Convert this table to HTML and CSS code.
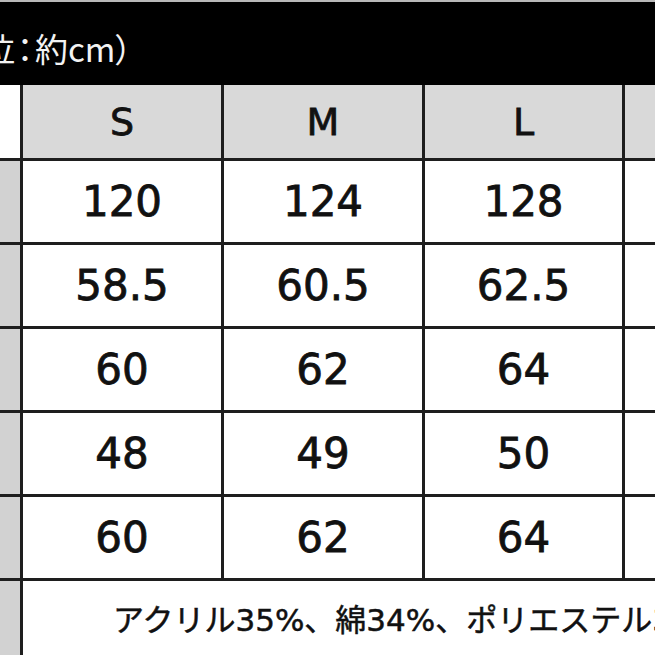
FILE: index.html
```html
<!DOCTYPE html>
<html lang="ja">
<head>
<meta charset="utf-8">
<link rel="stylesheet" href="styles.css">
</head>
<body>
<div class="topline"></div>
<div class="title"><span class="title-text">位<span class="colon">：</span>約cm）</span></div>
<div class="chart">
  <div class="cell side-head"></div>
  <div class="cell head">S</div>
  <div class="cell head">M</div>
  <div class="cell head">L</div>
  <div class="cell head"></div>

  <div class="cell side"></div>
  <div class="cell">120</div>
  <div class="cell">124</div>
  <div class="cell">128</div>
  <div class="cell"></div>

  <div class="cell side"></div>
  <div class="cell">58.5</div>
  <div class="cell">60.5</div>
  <div class="cell">62.5</div>
  <div class="cell"></div>

  <div class="cell side"></div>
  <div class="cell">60</div>
  <div class="cell">62</div>
  <div class="cell">64</div>
  <div class="cell"></div>

  <div class="cell side"></div>
  <div class="cell">48</div>
  <div class="cell">49</div>
  <div class="cell">50</div>
  <div class="cell"></div>

  <div class="cell side"></div>
  <div class="cell">60</div>
  <div class="cell">62</div>
  <div class="cell">64</div>
  <div class="cell"></div>

  <div class="cell side"></div>
  <div class="cell material">アクリル35%、綿34%、ポリエステル31%</div>
</div>
</body>
</html>
```
FILE: styles.css
```css
html, body {
  margin: 0;
  padding: 0;
  background: #ffffff;
  overflow: hidden;
  width: 655px;
  height: 655px;
}

body {
  font-family: "DejaVu Sans", "Noto Sans CJK JP", sans-serif;
  color: #111111;
}

.topline {
  height: 2px;
  background: #b8b8b8;
}

.title {
  height: 83px;
  background: #000000;
  display: flex;
  align-items: center;
  overflow: hidden;
  white-space: nowrap;
}

.title-text {
  font-family: "Noto Sans CJK JP", sans-serif;
  font-feature-settings: "palt";
  font-size: 33px;
  color: #f2f2f2;
  margin-left: -18px;
  padding-top: 8px;
}

.colon {
  display: inline-block;
  width: 20px;
  text-align: center;
}

.chart {
  display: grid;
  grid-template-columns: 20px 198px 198px 197px 140px;
  grid-template-rows: 73px repeat(5, 81px) 90px;
  gap: 3px;
  background: #1e1e1e;
  width: max-content;
}

.cell {
  background: #ffffff;
  display: flex;
  align-items: center;
  justify-content: center;
  font-size: 42px;
  line-height: 1;
  -webkit-text-stroke: 0.8px #111111;
}

.head {
  background: #d9d9d9;
  font-size: 38px;
}

.side-head {
  background: #ffffff;
}

.side {
  background: #d2d2d2;
}

.material {
  grid-column: 2 / 6;
  justify-content: flex-start;
  align-items: flex-start;
  padding-left: 90px;
  padding-top: 24px;
  font-size: 31px;
  white-space: nowrap;
  overflow: hidden;
  -webkit-text-stroke: 0.5px #111111;
}
```
